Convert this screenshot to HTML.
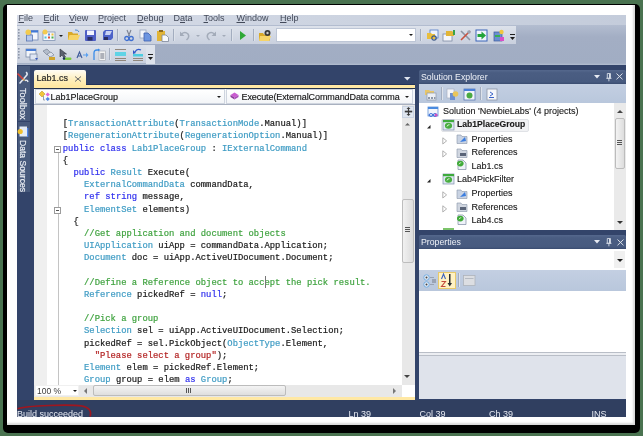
<!DOCTYPE html>
<html><head><meta charset="utf-8">
<style>
*{margin:0;padding:0;box-sizing:border-box}
html,body{width:643px;height:436px;overflow:hidden;background:#4a7350}
body{position:relative;font-family:"Liberation Sans",sans-serif;font-size:9px;color:#1e1e1e}
.a{position:absolute}
svg{position:absolute;overflow:visible}
#blk{left:3px;top:4px;width:637px;height:429px;background:#000;border-radius:5px}
#wht{left:7px;top:5px;width:628px;height:420px;background:#fff;box-shadow:inset -2px -2px 2px rgba(0,0,0,.15)}
#vs{left:17px;top:15px;width:609px;height:402px;background:#33446a}
.mi{position:absolute;top:12.8px;margin-left:0.5px;font-size:9px;line-height:10px;color:#434a5a}
.mi u{text-decoration:underline;text-decoration-thickness:0.7px;text-underline-offset:0.8px}
.tb{position:absolute;background:linear-gradient(#dde2eb,#c9d0de)}
.sep{position:absolute;width:2px;background:linear-gradient(90deg,#a3adbf 50%,#dde2ea 50%)}
.dd{position:absolute;width:0;height:0;border-left:2.5px solid transparent;border-right:2.5px solid transparent;border-top:2.5px solid #1d1d1d}
.code{position:absolute;-webkit-text-stroke:0.2px;font-family:"Liberation Mono",monospace;font-size:8.85px;line-height:12.18px;white-space:pre;color:#1a1a1a}
.k{color:#3030ee}.t{color:#3f9cc4}.c{color:#40a340}.s{color:#b42424}
.hdr{position:absolute;background:linear-gradient(#55688d,#4a5d82 20%,#475a7f 85%,#3a4c70);border-radius:2px 2px 0 0}
.ht{position:absolute;color:#eef1f7;font-size:9px;line-height:10px}
.tr{position:absolute;margin-top:-0.6px;font-size:9px;line-height:10px;color:#1a1a1a;-webkit-text-stroke:0.12px}
.st{position:absolute;color:#e6eaf2;font-size:9px;line-height:10px;top:408.5px}
.exp{position:absolute;width:5px;height:7px;background:linear-gradient(to bottom right,transparent 50%,transparent 50%)}
</style></head><body>
<div id="wrap" style="position:absolute;left:0;top:0;width:643px;height:436px;filter:blur(0.35px)">
<div id="blk" class="a"></div>
<div id="wht" class="a"></div>
<div id="vs" class="a"></div>

<!-- menu bar -->
<div class="a" style="left:17px;top:15px;width:609px;height:10px;background:linear-gradient(90deg,#d7dce8,#cdd4e1 50%,#c4ccdb)"></div>
<div class="mi" style="left:18px"><u>F</u>ile</div>
<div class="mi" style="left:43px"><u>E</u>dit</div>
<div class="mi" style="left:68.5px"><u>V</u>iew</div>
<div class="mi" style="left:97.5px"><u>P</u>roject</div>
<div class="mi" style="left:136.5px"><u>D</u>ebug</div>
<div class="mi" style="left:173px">D<u>a</u>ta</div>
<div class="mi" style="left:203px"><u>T</u>ools</div>
<div class="mi" style="left:236px"><u>W</u>indow</div>
<div class="mi" style="left:279.5px"><u>H</u>elp</div>

<!-- command dock -->
<div class="a" style="left:17px;top:25px;width:609px;height:39.5px;background:linear-gradient(#b3bdd0,#a3aec4 30%,#a1adc3 95%,#b4bed0)"></div>
<div class="tb" style="left:17px;top:25.5px;width:499px;height:18px"></div>
<div class="tb" style="left:17px;top:45px;width:138px;height:18px"></div>
<!-- grips -->
<svg style="left:18px;top:29px" width="3" height="12"><g fill="#8d97a9"><rect x="0" y="0" width="1.6" height="1.6"/><rect x="0" y="3" width="1.6" height="1.6"/><rect x="0" y="6" width="1.6" height="1.6"/><rect x="0" y="9" width="1.6" height="1.6"/></g></svg>
<svg style="left:18px;top:48px" width="3" height="12"><g fill="#8d97a9"><rect x="0" y="0" width="1.6" height="1.6"/><rect x="0" y="3" width="1.6" height="1.6"/><rect x="0" y="6" width="1.6" height="1.6"/><rect x="0" y="9" width="1.6" height="1.6"/></g></svg>

<!-- toolbar 1 icons -->
<svg style="left:25px;top:29px" width="14" height="13">
  <rect x="6" y="1.5" width="7" height="9.5" fill="#f3f6fb" stroke="#6d86b6" stroke-width=".8"/>
  <rect x="6" y="1.5" width="7" height="2" fill="#3f78d8"/>
  <rect x="1.5" y="6" width="6" height="6" fill="#b6c9ef" stroke="#5a76ae" stroke-width=".8"/>
  <circle cx="3.2" cy="3.2" r="2.7" fill="#f3cb4f"/>
</svg>
<svg style="left:42px;top:29px" width="14" height="13">
  <rect x="1" y="3" width="12" height="8.5" fill="#f5f7fb" stroke="#8193b3" stroke-width=".8"/>
  <rect x="6" y="4.5" width="2" height="2" fill="#5e8fdc"/><rect x="9.5" y="4.5" width="2" height="2" fill="#f0c23a"/>
  <rect x="2.5" y="7.5" width="2" height="2" fill="#4cc3d9"/><rect x="6" y="7.5" width="2" height="2" fill="#e0503a"/><rect x="9.5" y="7.5" width="2" height="2" fill="#4cb04c"/>
  <circle cx="3" cy="3" r="2.5" fill="#f3cb4f"/>
</svg>
<div class="dd" style="left:58.5px;top:34.5px"></div>
<svg style="left:67px;top:29px" width="14" height="13">
  <path d="M1 3 h4 l1 1.5 h5 v6.5 h-10z" fill="#d9a928"/>
  <path d="M2.5 6 h10.5 l-2 5 h-10z" fill="#f6d468"/>
  <path d="M8 1 q3 -.5 4 2" stroke="#4d8ad6" stroke-width="1" fill="none"/>
</svg>
<svg style="left:84px;top:29px" width="13" height="13">
  <rect x="1" y="1" width="11" height="11" rx="1" fill="#4f5fc6"/>
  <rect x="3" y="1.5" width="7" height="4.5" fill="#f2f4ff"/>
  <rect x="3.5" y="8" width="5" height="3.5" fill="#2a2f62"/>
</svg>
<svg style="left:101px;top:29px" width="13" height="13">
  <path d="M4 1 h8 v8 l-2 2 h-8 v-8z" fill="#4c62c8"/>
  <path d="M5 2 l6 0 l-2 4 h-5z" fill="#c8d2f4"/>
  <rect x="3" y="8" width="4" height="3" fill="#2a2f62"/>
</svg>
<div class="sep" style="left:117px;top:29px;height:12px"></div>
<svg style="left:124px;top:29px" width="10" height="13">
  <path d="M3 1 l2.5 6 M7 1 l-2.5 6" stroke="#7a8191" stroke-width="1.1"/>
  <circle cx="2.8" cy="9.5" r="2" fill="none" stroke="#3f6fd0" stroke-width="1.3"/>
  <circle cx="7.2" cy="9.5" r="2" fill="none" stroke="#3f6fd0" stroke-width="1.3"/>
</svg>
<svg style="left:139px;top:29px" width="13" height="13">
  <rect x="1" y="1" width="6" height="8" fill="#f4f6fb" stroke="#9aa7bf" stroke-width=".8"/>
  <path d="M5 4 h4 l3 3 v5 h-7z" fill="#6d95e0" stroke="#3e5fb0" stroke-width=".8"/>
</svg>
<svg style="left:155.5px;top:29px" width="14" height="13">
  <rect x="1" y="2" width="8" height="10" fill="#e2b537"/>
  <rect x="3" y="1" width="4" height="2" fill="#8a6a22"/>
  <path d="M6 6 h4 l2.5 2.5 v4 h-6.5z" fill="#f7f9fc" stroke="#7d889b" stroke-width=".8"/>
</svg>
<div class="sep" style="left:173px;top:29px;height:12px"></div>
<svg style="left:179px;top:29px" width="11" height="13">
  <path d="M2.5 5 q3.5 -3 6.5 0 q2 3 -1.5 6" stroke="#a3abb9" stroke-width="1.5" fill="none"/>
  <path d="M1 2.5 v4.5 h4.5z" fill="#a3abb9"/>
</svg>
<div class="dd" style="left:195.5px;top:34.5px;border-top-color:#a3abb9"></div>
<svg style="left:205.5px;top:29px" width="11" height="13">
  <path d="M8.5 5 q-3.5 -3 -6.5 0 q-2 3 1.5 6" stroke="#a3abb9" stroke-width="1.5" fill="none"/>
  <path d="M10 2.5 v4.5 h-4.5z" fill="#a3abb9"/>
</svg>
<div class="dd" style="left:222px;top:34.5px;border-top-color:#a3abb9"></div>
<div class="sep" style="left:231px;top:29px;height:12px"></div>
<svg style="left:239px;top:30px" width="8" height="11"><path d="M1 1 l6 4.5 l-6 4.5z" fill="#2ea836"/></svg>
<div class="sep" style="left:253px;top:29px;height:12px"></div>
<svg style="left:258px;top:29px" width="14" height="13">
  <path d="M1 4 h4 l1 1.5 h6 v6 h-11z" fill="#d9a928"/>
  <path d="M2 7 h11 l-2 5 h-10z" fill="#f6d468"/>
  <circle cx="9.5" cy="4" r="3" fill="#3a3a3a"/><circle cx="9.5" cy="4" r="1.2" fill="#cfcfcf"/>
</svg>
<!-- combo -->
<div class="a" style="left:275.5px;top:28px;width:140px;height:14px;background:#fff;border:1px solid #bdc6d6"></div>
<div class="dd" style="left:408.5px;top:34px"></div>
<div class="sep" style="left:420px;top:29px;height:12px"></div>
<svg style="left:425.5px;top:29px" width="13" height="13">
  <rect x="4" y="1" width="8" height="8" fill="#eef3fb" stroke="#4f7ac8" stroke-width=".8"/>
  <path d="M1 4 h4 l1 1 h3 v5 h-8z" fill="#e8be3e"/>
  <circle cx="8" cy="9" r="2.2" fill="none" stroke="#3e5a86" stroke-width="1.2"/>
</svg>
<svg style="left:442px;top:29px" width="14" height="13">
  <rect x="1" y="5" width="9" height="7" fill="#f4f6fb" stroke="#7e8ba3" stroke-width=".8"/>
  <path d="M4 2 h6 l2 2 v3 h-8z" fill="#e2b537"/>
  <rect x="11" y="1" width="2" height="5" fill="#3aa34a"/>
</svg>
<svg style="left:458.5px;top:29px" width="13" height="13">
  <path d="M2 2 l9 9" stroke="#8b93a3" stroke-width="1.6"/>
  <path d="M11 2 l-9 9" stroke="#c9503e" stroke-width="1.6"/>
  <circle cx="10" cy="3" r="1.8" fill="#9aa2b1"/>
</svg>
<svg style="left:475px;top:29px" width="13" height="13">
  <rect x="1" y="1" width="11" height="11" fill="#eef3fb" stroke="#3b64b8" stroke-width="1"/>
  <path d="M2.5 5 h4 v-2.5 l4.5 4 l-4.5 4 v-2.5 h-4z" fill="#22a43a"/>
</svg>
<svg style="left:492.5px;top:29px" width="12" height="13">
  <rect x="1" y="3" width="8" height="9" fill="#6a8fd0" stroke="#3e5a9a" stroke-width=".7"/>
  <rect x="2" y="6" width="5" height="2" fill="#38b050"/>
  <circle cx="8.5" cy="3" r="2.2" fill="#f1c640"/>
  <rect x="7" y="8" width="4" height="4" fill="#d94ec8"/>
</svg>
<svg style="left:509px;top:33px" width="7" height="9"><rect x="1" y="1" width="5" height="1" fill="#1d1d1d"/><path d="M1 4 h5 l-2.5 3z" fill="#1d1d1d"/></svg>

<!-- toolbar 2 icons -->
<svg style="left:25px;top:48px" width="14" height="13">
  <rect x="1" y="1" width="10" height="8" fill="#f2f5fb" stroke="#7c8ca8" stroke-width=".8"/>
  <rect x="1" y="1" width="10" height="2" fill="#4a7fd8"/>
  <rect x="5" y="6" width="7" height="6" fill="#dfe6f3" stroke="#7c8ca8" stroke-width=".8"/>
  <path d="M10 10 l3 0 l-1.5 2z" fill="#3a5cc0"/>
</svg>
<svg style="left:42px;top:48px" width="14" height="13">
  <path d="M1 3 l4 -2 l4 4 l-4 2z" fill="#b3bccb" stroke="#7b8596" stroke-width=".7"/>
  <path d="M5 6 l4 -2 l3 3 l-4 2z" fill="#dce1ea" stroke="#7b8596" stroke-width=".7"/>
  <rect x="7" y="9" width="6" height="3" fill="#d1a62e"/>
</svg>
<svg style="left:59px;top:48px" width="13" height="13">
  <path d="M1 1 l0 8 l2 -2 l2 3 l1.5 -1 l-2 -3 l3 0z" fill="#5b6170" stroke="#2f3440" stroke-width=".6"/>
  <rect x="4" y="9.5" width="8.5" height="2.5" rx="1.2" fill="#7ccb3f"/>
  <circle cx="5" cy="10.5" r="1.2" fill="#1c2f66"/>
</svg>
<svg style="left:75.5px;top:50px" width="13" height="9">
  <path d="M1 8 l2.5 -6 l2.5 6 M2 6 h3" stroke="#3d5a9a" stroke-width="1.1" fill="none"/>
  <path d="M7 4.5 h3 v-2 l2.5 2.5 l-2.5 2.5 v-2 h-3z" fill="#5aa0f0"/>
</svg>
<svg style="left:91.5px;top:48px" width="14" height="13">
  <path d="M2 12 v-7 q0 -3 3 -3 h2" stroke="#3a8ce8" stroke-width="1.3" fill="none"/>
  <path d="M6 0.5 l2.5 1.5 l-2.5 1.5z" fill="#3a8ce8"/>
  <rect x="7" y="3" width="6.5" height="9.5" fill="#f3f3f3" stroke="#9ea4ae" stroke-width=".6"/>
  <g fill="#6b7180"><rect x="8.3" y="5.5" width="4" height="1"/><rect x="8.3" y="7.5" width="4" height="1"/><rect x="8.3" y="9.5" width="4" height="1"/></g>
</svg>
<div class="sep" style="left:108.5px;top:48px;height:12px"></div>
<svg style="left:114px;top:48px" width="13" height="13">
  <rect x="1" y="1" width="11" height=".9" fill="#8a7d70"/>
  <rect x="1" y="4" width="11" height="4" fill="#5fd3e6"/>
  <rect x="1" y="10" width="11" height=".9" fill="#8a7d70"/>
  <rect x="1" y="12" width="11" height=".9" fill="#8a7d70"/>
</svg>
<svg style="left:131.5px;top:48px" width="12" height="13">
  <path d="M3 4 q2 -4 6 -2" stroke="#2f58c8" stroke-width="1.3" fill="none"/>
  <path d="M1 2 l3 3 l-3 1z" fill="#2f58c8"/>
  <rect x="1" y="6" width="10" height="2.5" fill="#4ccde0"/>
  <rect x="1" y="10" width="10" height=".9" fill="#8a7d70"/>
  <rect x="1" y="12" width="10" height=".9" fill="#8a7d70"/>
</svg>
<div class="a" style="left:145.5px;top:45.5px;width:9.5px;height:18px;background:#dde2eb"></div>
<svg style="left:147px;top:53px" width="7" height="9"><rect x="1" y="1" width="5" height="1" fill="#1d1d1d"/><path d="M1 4 h5 l-2.5 3z" fill="#1d1d1d"/></svg>

<!-- left toolbox strip -->
<div class="a" style="left:17.5px;top:66px;width:12.5px;height:55px;background:#485a7c"></div>
<div class="a" style="left:17.5px;top:122px;width:12.5px;height:70px;background:#485a7c"></div>
<svg style="left:17px;top:71px" width="12" height="14">
  <path d="M9.5 1.5 q1.5 2 -0.5 3.5 l-6 7" stroke="#e4e9f1" stroke-width="1.6" fill="none" stroke-linecap="round"/>
  <path d="M8 9.5 q2.5 -1 3 1.5" stroke="#e4e9f1" stroke-width="1.4" fill="none"/>
  <path d="M1 3 l5.5 5.5" stroke="#d8403a" stroke-width="1.6" stroke-linecap="round"/>
  <path d="M6 8 l1.5 1.5" stroke="#e8d070" stroke-width="1.3"/>
</svg>
<div class="a" style="left:17px;top:87.5px;width:12px;height:40px;white-space:nowrap;color:#eef1f6;-webkit-text-stroke:0.15px;font-size:9.2px;line-height:12px;writing-mode:vertical-rl">Toolbox</div>
<svg style="left:17px;top:125px" width="12" height="13">
  <rect x="2.5" y="1.5" width="7.5" height="10" fill="#e4ecf6"/>
  <rect x="10" y="3" width="1.3" height="9" fill="#4f86e8"/>
  <circle cx="3.2" cy="6.5" r="2.6" fill="#f0c030"/>
</svg>
<div class="a" style="left:17px;top:139.5px;width:12px;height:60px;white-space:nowrap;color:#eef1f6;-webkit-text-stroke:0.15px;font-size:8.6px;line-height:12px;writing-mode:vertical-rl">Data Sources</div>

<!-- document tab well -->
<div class="a" style="left:34px;top:69.5px;width:52px;height:16px;background:linear-gradient(#fffdf6,#fff0c0 55%,#ffe8a4);border-radius:2px 2px 0 0"></div>
<div class="a" style="left:36.5px;top:72.8px;font-size:9px;line-height:10px;color:#2a2a2a;-webkit-text-stroke:0.2px">Lab1.cs</div>
<svg style="left:73.5px;top:75.5px" width="9" height="6"><path d="M1 0.5 l6 5 M7 0.5 l-6 5" stroke="#6a6a6a" stroke-width="1"/></svg>
<div class="a" style="left:86px;top:84px;width:328.5px;height:1px;background:#22325a"></div><div class="a" style="left:34px;top:85px;width:380.5px;height:3px;background:#ffe8a4"></div>
<div class="a" style="left:34px;top:88px;width:380.5px;height:1px;background:#24324c"></div>
<svg style="left:403.5px;top:76.5px" width="7" height="5"><path d="M0 0 h6.5 l-3.25 3.5z" fill="#dfe5ef"/></svg>

<!-- nav bar -->
<div class="a" style="left:34px;top:89px;width:380.5px;height:15.5px;background:#f4f6f9"></div>
<div class="a" style="left:35px;top:89px;width:189.5px;height:14.5px;background:linear-gradient(#ffffff,#f3f5f8);border:1px solid #cfd5df"></div>
<svg style="left:38px;top:90px" width="13" height="12">
  <path d="M1 4 l3 -3 l3 3 l-3 3z" fill="#f0c53c" stroke="#b58a1c" stroke-width=".5"/>
  <path d="M7.5 4.5 l2.2 -2 l2.2 2 l-2.2 2z" fill="#e06ad8"/>
  <path d="M7.5 9 l2.2 -2 l2.2 2 l-2.2 2z" fill="#4f88e4"/>
  <path d="M5.5 6 v4 h1.5" stroke="#8d97a8" stroke-width=".9" fill="none"/>
</svg>
<div class="a" style="left:50.5px;top:92.8px;font-size:9px;line-height:8px;color:#161616;-webkit-text-stroke:0.15px">Lab1PlaceGroup</div>
<div class="dd" style="left:216.5px;top:96px"></div>
<div class="a" style="left:226px;top:89px;width:187px;height:14.5px;background:linear-gradient(#ffffff,#f3f5f8);border:1px solid #cfd5df"></div>
<svg style="left:229px;top:90px" width="12" height="12">
  <path d="M1.5 5 l4 -2.5 l4 2.5 l-4 2.5z" fill="#c95bd0"/>
  <path d="M1.5 5 v2 l4 2.5 v-2z" fill="#8b3a9a"/>
  <path d="M9.5 5 v2 l-4 2.5 v-2z" fill="#a94ab8"/>
</svg>
<div class="a" style="left:241.5px;top:92.8px;font-size:9px;line-height:8px;color:#161616;letter-spacing:-0.09px;-webkit-text-stroke:0.15px">Execute(ExternalCommandData comma</div>
<div class="dd" style="left:404.5px;top:96px"></div>
<div class="a" style="left:34px;top:103.5px;width:380.5px;height:1.5px;background:#a9b1c0"></div>

<!-- editor -->
<div class="a" style="left:34px;top:105px;width:368px;height:279.5px;background:#fff;overflow:hidden">
  <div class="a" style="left:0;top:0;width:12.5px;height:280px;background:#efefef"></div>
  <div class="a" style="left:23.5px;top:47px;width:1px;height:233px;background:#c4c4c4"></div>
  <svg style="left:20px;top:41px" width="8" height="8"><rect x=".5" y=".5" width="6" height="6" fill="#fff" stroke="#9c9c9c" stroke-width="1"/><rect x="2" y="3" width="3" height="1" fill="#555"/></svg>
  <svg style="left:20px;top:102px" width="8" height="8"><rect x=".5" y=".5" width="6" height="6" fill="#fff" stroke="#9c9c9c" stroke-width="1"/><rect x="2" y="3" width="3" height="1" fill="#555"/></svg>
  <div class="code" style="left:28.8px;top:13.3px">[<span class="t">TransactionAttribute</span>(<span class="t">TransactionMode</span>.Manual)]
[<span class="t">RegenerationAttribute</span>(<span class="t">RegenerationOption</span>.Manual)]
<span class="k">public</span> <span class="k">class</span> <span class="t">Lab1PlaceGroup</span> : <span class="t">IExternalCommand</span>
{
  <span class="k">public</span> <span class="t">Result</span> Execute(
    <span class="t">ExternalCommandData</span> commandData,
    <span class="k">ref</span> <span class="k">string</span> message,
    <span class="t">ElementSet</span> elements)
  {
    <span class="c">//Get application and document objects</span>
    <span class="t">UIApplication</span> uiApp = commandData.Application;
    <span class="t">Document</span> doc = uiApp.ActiveUIDocument.Document;

    <span class="c">//Define a Reference object to accept the pick result.</span>
    <span class="t">Reference</span> pickedRef = <span class="k">null</span>;

    <span class="c">//Pick a group</span>
    <span class="t">Selection</span> sel = uiApp.ActiveUIDocument.Selection;
    pickedRef = sel.PickObject(<span class="t">ObjectType</span>.Element,
      <span class="s">"Please select a group"</span>);
    <span class="t">Element</span> elem = pickedRef.Element;
    <span class="t">Group</span> group = elem <span class="k">as</span> <span class="t">Group</span>;</div>
  <div class="a" style="left:231px;top:171px;width:1px;height:12px;background:#777"></div>
</div>

<!-- vertical scrollbar -->
<div class="a" style="left:401.5px;top:105px;width:13px;height:279.5px;background:#e8e8e8"></div>
<div class="a" style="left:401.5px;top:105.5px;width:12.5px;height:12.5px;background:#dfe6f0;border:1px solid #c9d3e2"></div>
<svg style="left:403.5px;top:106px" width="9" height="11"><path d="M4.5 1 l2 2 h-4z M4.5 10 l2 -2 h-4z" fill="#3a3a3a"/><rect x="3.9" y="3" width="1.2" height="5" fill="#3a3a3a"/><rect x="0.8" y="4.7" width="7.4" height="1.7" fill="#3a3a3a"/></svg>
<svg style="left:405px;top:122.5px" width="5" height="4"><path d="M2.5 0 l2.5 2.5 h-5z" fill="#666"/></svg>
<div class="a" style="left:402px;top:199px;width:11.5px;height:63.5px;background:linear-gradient(90deg,#f1f1f1,#dcdcdc);border:1px solid #bdbdbd;border-radius:2px"></div>
<svg style="left:404.5px;top:227px" width="6" height="6"><g fill="#555"><rect y="0" width="5" height="1"/><rect y="2" width="5" height="1"/><rect y="4" width="5" height="1"/></g></svg>
<svg style="left:404px;top:374.5px" width="7" height="4"><path d="M0 0 h6 l-3 3z" fill="#444"/></svg>

<!-- horizontal scrollbar -->
<div class="a" style="left:34px;top:384.5px;width:367.5px;height:12px;background:#e8e8e8"></div>
<div class="a" style="left:35px;top:384.5px;width:44px;height:11.5px;background:#fff;border:1px solid #f0f0f0"></div>
<div class="a" style="left:37px;top:386.5px;font-size:8.5px;line-height:8px;color:#3a3a3a">100 %</div>
<div class="dd" style="left:73px;top:389.5px"></div>
<svg style="left:84px;top:388px" width="4" height="6"><path d="M3 0 v6 l-3 -3z" fill="#777"/></svg>
<div class="a" style="left:93px;top:384.5px;width:192.5px;height:11.5px;background:linear-gradient(#f4f4f4,#dedede);border:1px solid #bcbcbc;border-radius:2px"></div>
<svg style="left:186px;top:387.5px" width="7" height="6"><g fill="#555"><rect x="0" width="1" height="5"/><rect x="2" width="1" height="5"/><rect x="4" width="1" height="5"/></g></svg>
<svg style="left:392.5px;top:387.5px" width="4" height="6"><path d="M0 0 v6 l3 -3z" fill="#777"/></svg>
<div class="a" style="left:401.5px;top:384.5px;width:13px;height:12px;background:#fff"></div>
<div class="a" style="left:34px;top:396.5px;width:380.5px;height:3px;background:#ffe8a4"></div>

<!-- Solution Explorer -->
<div class="hdr" style="left:418.5px;top:70px;width:207px;height:13.5px"></div>
<div class="ht" style="left:421px;top:72.3px;font-size:8.75px">Solution Explorer</div>
<svg style="left:593.5px;top:74.5px" width="6" height="4"><path d="M0 0 h6 l-3 3.5z" fill="#e6eaf2"/></svg>
<svg style="left:605.5px;top:72.5px" width="6" height="9"><path d="M1.3 .5 h3.2 v4.8 h-3.2z M.3 5.3 h5.2 M2.9 5.3 v3" stroke="#d6dce6" stroke-width=".9" fill="none"/><rect x="3" y="1" width="1" height="4" fill="#d6dce6"/></svg>
<svg style="left:616.3px;top:73.3px" width="8" height="7"><path d="M.5 .5 l6 5.8 M6.5 .5 l-6 5.8" stroke="#dde2ea" stroke-width="1"/></svg>
<div class="a" style="left:418.5px;top:83.5px;width:207px;height:19.5px;background:linear-gradient(#c3cfe2,#b9c7dc)"></div>
<svg style="left:424px;top:88px" width="13" height="13">
  <path d="M1 2 h4 l1 1 h4 v4 h-9z" fill="#e8c668"/>
  <rect x="3" y="5" width="9" height="7" fill="#eceff5" stroke="#8d98aa" stroke-width=".7"/>
  <g fill="#8d98aa"><rect x="4" y="9" width="2" height="2"/><rect x="7" y="9" width="2" height="2"/><rect x="10" y="9" width="1.5" height="2"/></g>
</svg>
<div class="sep" style="left:440.5px;top:87px;height:13px"></div>
<svg style="left:446px;top:88px" width="13" height="13">
  <rect x="1" y="1" width="7" height="9" fill="#f5f6fa" stroke="#a8b0c0" stroke-width=".7"/>
  <rect x="4" y="5" width="5" height="7" fill="#6c8fd0"/>
  <circle cx="9.5" cy="6" r="2.8" fill="#e9c55a"/>
</svg>
<svg style="left:462.5px;top:88px" width="13" height="13">
  <rect x="1" y="1" width="11" height="11" fill="#f1f4f9" stroke="#5a79b5" stroke-width=".8"/>
  <rect x="1" y="1" width="11" height="2" fill="#4a7fd8"/>
  <circle cx="6.5" cy="7.5" r="3" fill="#4aaa42"/>
</svg>
<div class="sep" style="left:479.5px;top:87px;height:13px"></div>
<svg style="left:485.5px;top:88px" width="12" height="13">
  <rect x="1" y="1" width="10" height="11" fill="#f4f6fa" stroke="#8e97a8" stroke-width=".8"/>
  <path d="M4 4 l3 2 l-3 2" stroke="#3a62c8" stroke-width="1" fill="none"/>
  <rect x="3" y="9" width="5" height="1" fill="#3a62c8"/>
</svg>
<!-- tree -->
<div class="a" style="left:418.5px;top:103px;width:207px;height:126.7px;background:#fff"></div>
<svg style="left:427px;top:105.5px" width="13" height="12">
  <rect x="1" y="1" width="10" height="9" fill="#f3f6fb" stroke="#5d8fd6" stroke-width=".8"/>
  <rect x="1" y="1" width="10" height="2" fill="#4a8be0"/>
  <path d="M2 9 q2 -3 4 0 q2 3 4 0 q-2 -3 -4 0 q-2 3 -4 0z" stroke="#3a6fd8" stroke-width="1.2" fill="none"/>
  <circle cx="9" cy="9" r="1.5" fill="#d050c0"/>
</svg>
<div class="tr" style="left:443px;top:107px">Solution 'NewbieLabs' (4 projects)</div>
<div class="a" style="left:441px;top:118.5px;width:88px;height:13px;background:#f1f2f4;border:1px solid #e0e2e6;border-radius:2px"></div>
<svg style="left:426.5px;top:124.5px" width="4" height="4"><path d="M3.5 0 v3.5 h-3.5z" fill="#262626"/></svg>
<svg style="left:441.5px;top:119px" width="13" height="12">
  <rect x="1" y="1" width="11" height="10" fill="#dfe8f2" stroke="#7f90ab" stroke-width=".7"/>
  <rect x="1" y="1" width="11" height="2.2" fill="#3eaa3c"/>
  <ellipse cx="6.5" cy="6.8" rx="3.6" ry="3" fill="#47ad3f"/>
  <path d="M5 7.5 q0.5 -2 2.5 -1.8" stroke="#e8f5e0" stroke-width=".9" fill="none"/>
</svg>
<div class="tr" style="left:457px;top:120px;font-weight:bold;font-size:8.6px">Lab1PlaceGroup</div>
<svg style="left:441.5px;top:136.5px" width="6" height="8"><path d="M.8 .8 L4.6 3.9 L.8 7z" fill="#fff" stroke="#a9a9a9" stroke-width=".9"/></svg>
<svg style="left:455.5px;top:134px" width="12" height="10">
  <path d="M1 1 h4 l1 1.5 h5 v7 h-10z" fill="#c9d3e3" stroke="#8894a8" stroke-width=".6"/>
  <path d="M4 8 l5 -5 l1 4z" fill="#3c7ee0"/>
</svg>
<div class="tr" style="left:471.5px;top:134.5px">Properties</div>
<svg style="left:441.5px;top:150px" width="6" height="8"><path d="M.8 .8 L4.6 3.9 L.8 7z" fill="#fff" stroke="#a9a9a9" stroke-width=".9"/></svg>
<svg style="left:455.5px;top:147.5px" width="12" height="10">
  <path d="M1 1 h4 l1 1.5 h5 v7 h-10z" fill="#d0d6e0" stroke="#8894a8" stroke-width=".6"/>
  <rect x="4" y="5" width="6" height="3" fill="#5a6478"/>
</svg>
<div class="tr" style="left:471.5px;top:148px">References</div>
<svg style="left:456px;top:159px" width="11" height="12">
  <path d="M2 1 h5 l3 3 v6.5 h-8z" fill="#eef2f8" stroke="#7d8aa2" stroke-width=".7"/>
  <ellipse cx="4.3" cy="4.6" rx="3.3" ry="2.8" fill="#3faa38"/>
  <path d="M3 5.3 q.5 -1.8 2.3 -1.6" stroke="#e8f5e0" stroke-width=".8" fill="none"/>
</svg>
<div class="tr" style="left:471.5px;top:161.5px">Lab1.cs</div>
<svg style="left:426.5px;top:178.5px" width="4" height="4"><path d="M3.5 0 v3.5 h-3.5z" fill="#262626"/></svg>
<svg style="left:441.5px;top:173px" width="13" height="12">
  <rect x="1" y="1" width="11" height="10" fill="#dfe8f2" stroke="#7f90ab" stroke-width=".7"/>
  <rect x="1" y="1" width="11" height="2.2" fill="#3eaa3c"/>
  <ellipse cx="6.5" cy="6.8" rx="3.6" ry="3" fill="#47ad3f"/>
  <path d="M5 7.5 q0.5 -2 2.5 -1.8" stroke="#e8f5e0" stroke-width=".9" fill="none"/>
</svg>
<div class="tr" style="left:457px;top:175px">Lab4PickFilter</div>
<svg style="left:441.5px;top:191px" width="6" height="8"><path d="M.8 .8 L4.6 3.9 L.8 7z" fill="#fff" stroke="#a9a9a9" stroke-width=".9"/></svg>
<svg style="left:455.5px;top:188.5px" width="12" height="10">
  <path d="M1 1 h4 l1 1.5 h5 v7 h-10z" fill="#c9d3e3" stroke="#8894a8" stroke-width=".6"/>
  <path d="M4 8 l5 -5 l1 4z" fill="#3c7ee0"/>
</svg>
<div class="tr" style="left:471.5px;top:188.5px">Properties</div>
<svg style="left:441.5px;top:204.5px" width="6" height="8"><path d="M.8 .8 L4.6 3.9 L.8 7z" fill="#fff" stroke="#a9a9a9" stroke-width=".9"/></svg>
<svg style="left:455.5px;top:202px" width="12" height="10">
  <path d="M1 1 h4 l1 1.5 h5 v7 h-10z" fill="#d0d6e0" stroke="#8894a8" stroke-width=".6"/>
  <rect x="4" y="5" width="6" height="3" fill="#5a6478"/>
</svg>
<div class="tr" style="left:471.5px;top:202.5px">References</div>
<svg style="left:456px;top:213.5px" width="11" height="12">
  <path d="M2 1 h5 l3 3 v6.5 h-8z" fill="#eef2f8" stroke="#7d8aa2" stroke-width=".7"/>
  <ellipse cx="4.3" cy="4.6" rx="3.3" ry="2.8" fill="#3faa38"/>
  <path d="M3 5.3 q.5 -1.8 2.3 -1.6" stroke="#e8f5e0" stroke-width=".8" fill="none"/>
</svg>
<div class="tr" style="left:471.5px;top:215.5px">Lab4.cs</div>
<div class="a" style="left:443px;top:228px;width:10.5px;height:1.7px;background:#7cc46a"></div>
<!-- tree scrollbar -->
<div class="a" style="left:614px;top:103px;width:11.5px;height:126.7px;background:#eaeaea"></div>
<svg style="left:617px;top:110px" width="6" height="4"><path d="M3 0 l3 3 h-6z" fill="#444"/></svg>
<div class="a" style="left:614.5px;top:117.5px;width:10.5px;height:51.5px;background:linear-gradient(90deg,#f3f3f3,#dddddd);border:1px solid #bcbcbc;border-radius:2px"></div>
<svg style="left:617px;top:140px" width="6" height="6"><g fill="#555"><rect y="0" width="5" height="1"/><rect y="2" width="5" height="1"/><rect y="4" width="5" height="1"/></g></svg>
<svg style="left:617px;top:221px" width="6" height="4"><path d="M0 0 h6 l-3 3z" fill="#333"/></svg>

<!-- Properties -->
<div class="hdr" style="left:418.5px;top:234.5px;width:207px;height:14.5px"></div>
<div class="ht" style="left:421px;top:237px;font-size:8.75px">Properties</div>
<svg style="left:593.5px;top:239.5px" width="6" height="4"><path d="M0 0 h6 l-3 3.5z" fill="#e6eaf2"/></svg>
<svg style="left:605.5px;top:237.5px" width="6" height="9"><path d="M1.3 .5 h3.2 v4.8 h-3.2z M.3 5.3 h5.2 M2.9 5.3 v3" stroke="#d6dce6" stroke-width=".9" fill="none"/><rect x="3" y="1" width="1" height="4" fill="#d6dce6"/></svg>
<svg style="left:616.5px;top:238.5px" width="8" height="7"><path d="M.5 .5 l6 5.8 M6.5 .5 l-6 5.8" stroke="#dde2ea" stroke-width="1"/></svg>
<div class="a" style="left:418.5px;top:249px;width:207px;height:21px;background:#fff"></div>
<div class="a" style="left:614px;top:251px;width:11px;height:17px;background:#f0f0f0"></div>
<svg style="left:617px;top:259px" width="6" height="4"><path d="M0 0 h6 l-3 3z" fill="#1d1d1d"/></svg>
<div class="a" style="left:418.5px;top:270px;width:207px;height:20.5px;background:linear-gradient(#c3cfe2,#b9c7dc)"></div>
<svg style="left:422.5px;top:273.5px" width="14" height="14">
  <circle cx="3.5" cy="3.5" r="2.7" fill="#e8eef8" stroke="#6aa8e0" stroke-width=".9"/>
  <circle cx="3.5" cy="10.5" r="2.7" fill="#e8eef8" stroke="#6aa8e0" stroke-width=".9"/>
  <circle cx="3.5" cy="3.5" r="1" fill="#444"/><circle cx="3.5" cy="10.5" r="1" fill="#444"/>
  <g fill="#9aa3b3"><rect x="7" y="3" width="4" height="1"/><rect x="7" y="10" width="4" height="1"/><rect x="9" y="5" width="4" height="4"/></g>
</svg>
<div class="a" style="left:438px;top:272px;width:18px;height:16.5px;background:#fff2c4;border:1px solid #e8c96a"></div>
<svg style="left:440px;top:273px" width="14" height="15">
  <path d="M1.5 6 l2 -5 l2 5" stroke="#3a62c0" stroke-width="1.1" fill="none"/>
  <path d="M1.5 8.5 h4 l-4 5 h4" stroke="#c44a3a" stroke-width="1.1" fill="none"/>
  <rect x="9" y="1" width="1.5" height="10" fill="#2f2f2f"/>
  <path d="M7.5 10 h4.5 l-2.25 3.5z" fill="#2f2f2f"/>
</svg>
<div class="sep" style="left:458px;top:273px;height:14px"></div>
<svg style="left:463px;top:275px" width="13" height="11"><rect x="0.5" y="0.5" width="11.5" height="10" fill="#dcdee2" stroke="#aeb3bb" stroke-width=".8"/><rect x="2" y="3" width="8.5" height="1" fill="#b5bac2"/></svg>
<div class="a" style="left:418.5px;top:290.5px;width:207px;height:61.5px;background:#fff"></div>
<div class="a" style="left:418.5px;top:352px;width:207px;height:4px;background:#eceef2;border-top:1px solid #b9bec7;border-bottom:1px solid #b9bec7"></div>
<div class="a" style="left:418.5px;top:356px;width:207px;height:43px;background:#dfe3eb"></div>

<!-- status bar -->
<div class="a" style="left:17px;top:399.5px;width:609px;height:17.5px;background:#303f60"></div>
<div class="st" style="left:17px">Build succeeded</div>
<div class="st" style="left:348.5px">Ln 39</div>
<div class="st" style="left:419.5px">Col 39</div>
<div class="st" style="left:489px">Ch 39</div>
<div class="st" style="left:591.5px">INS</div>
<svg style="left:15px;top:403px" width="82" height="16"><path d="M2.5 5.8 C 12 2.4, 55 1.4, 67 3 C 73.5 4, 77 8, 75 13.5" stroke="#a0161e" stroke-width="1.7" fill="none"/></svg>
</div>
</body></html>
